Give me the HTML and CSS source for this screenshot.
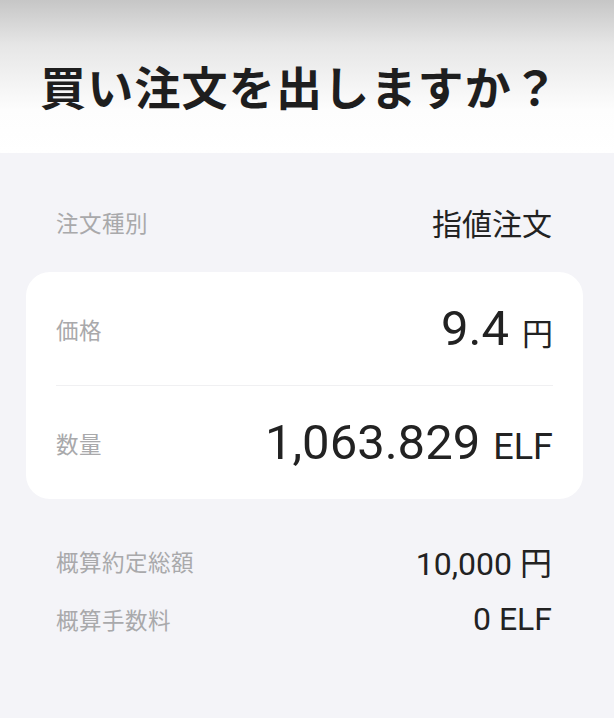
FILE: index.html
```html
<!DOCTYPE html>
<html>
	<head>
		<meta charset="UTF-8">
		<meta name="viewport" content="width=device-width, initial-scale=1.0" />
		<title>買い注文</title>
		<link rel="stylesheet" href="styles.css">
	</head>
	<body>
		<div class="head">
			<h1 class="title">買い注文を出しますか？</h1>
		</div>
		<div class="sheet">
			<div class="row type">
				<span class="label">注文種別</span>
				<span class="kind">指値注文</span>
			</div>
			<div class="card">
				<div class="row big">
					<span class="label">価格</span>
					<span class="val"><b>9.4</b><i class="unit jp">円</i></span>
				</div>
				<div class="row big">
					<span class="label">数量</span>
					<span class="val"><b>1,063.829</b><i class="unit">ELF</i></span>
				</div>
			</div>
			<div class="row small">
				<span class="label">概算約定総額</span>
				<span class="sum">10,000 <i class="jp">円</i></span>
			</div>
			<div class="row small">
				<span class="label">概算手数料</span>
				<span class="sum">0 ELF</span>
			</div>
		</div>
	</body>
</html>
```

FILE: styles.css
```css
body{margin:0;padding:0;background:#f4f4f8;font-family:"Noto Sans CJK JP","Noto Sans",sans-serif;color:#222;}
i,b{font-style:normal;font-weight:normal;}

.head{height:153px;background:linear-gradient(#c6c6c6,#e6e6e6 45px,#fdfdfd 110px,#fff);display:flex;align-items:center;padding:0 0 0 40px;box-sizing:border-box;}
.title{margin:0;padding-top:16px;font-size:46px;font-weight:bold;letter-spacing:1.2px;color:#1e1e1e;line-height:1;}

.sheet{padding:39px 31px 60px 26px;}
.row{display:flex;justify-content:space-between;align-items:center;padding:0 31px 0 30px;}
.label{font-size:22.5px;color:#a9a9ab;letter-spacing:0.5px;}

.type{height:60px;}
.kind{font-size:30px;color:#222;}

.card{background:#fff;border-radius:24px;margin-top:20px;padding:0 30px 0 30px;}
.card .row{padding:0;}
.big{height:113px;}
.big+.big{border-top:1px solid #f0f0f2;}
.val{display:flex;align-items:baseline;}
.val b{font-family:Roboto,"Liberation Sans",sans-serif;font-size:49px;color:#222;}
.val .unit{font-family:Roboto,"Noto Sans CJK JP",sans-serif;font-size:36px;margin-left:13px;color:#222;}
.val .unit.jp{font-family:"Noto Sans CJK JP",sans-serif;font-size:31px;}

.small{height:58px;}
.card+.small{margin-top:33px;}
.sum{font-family:Roboto,"Noto Sans CJK JP",sans-serif;font-size:32px;color:#222;}
.sum .jp{font-family:"Noto Sans CJK JP",sans-serif;}
```
